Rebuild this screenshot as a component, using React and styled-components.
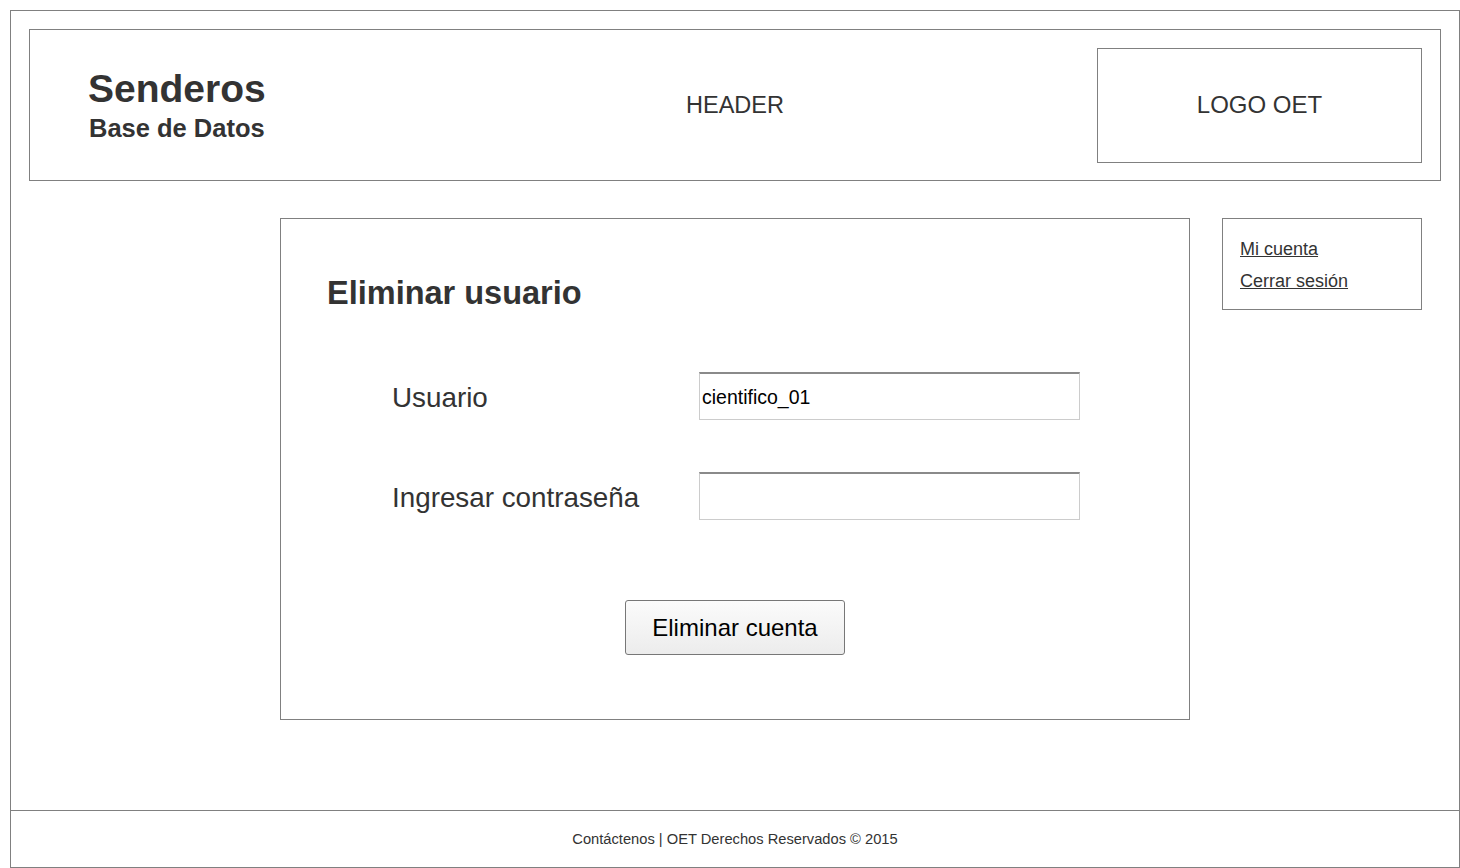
import React from 'react';
import styled, { createGlobalStyle } from 'styled-components';

const GlobalStyle = createGlobalStyle`
  html, body {
    margin: 0;
    padding: 0;
    background: #ffffff;
    font-family: "Liberation Sans", Arial, sans-serif;
    color: #333333;
  }
  #root {
    padding: 10px 0 0 10px;
  }
`;

function App() {
  return (
    <>
      <GlobalStyle />
      <Frame>
        <Header>
          <Brand>
            <BrandTitle>Senderos</BrandTitle>
            <BrandSub>Base de Datos</BrandSub>
          </Brand>
          <HeaderLabel>HEADER</HeaderLabel>
          <LogoBox>LOGO OET</LogoBox>
        </Header>

        <Main>
          <Panel>
            <Title>Eliminar usuario</Title>
            <Form>
              <Row>
                <Label>Usuario</Label>
                <Input type="text" defaultValue="cientifico_01" />
              </Row>
              <Row>
                <Label>Ingresar contraseña</Label>
                <Input type="password" />
              </Row>
            </Form>
            <Actions>
              <Button type="button">Eliminar cuenta</Button>
            </Actions>
          </Panel>
          <SideMenu>
            <MenuLink href="#">Mi cuenta</MenuLink>
            <MenuLink href="#">Cerrar sesión</MenuLink>
          </SideMenu>
        </Main>

        <Footer>Contáctenos | OET Derechos Reservados © 2015</Footer>
      </Frame>
    </>
  );
}

export default App;

const Frame = styled.div`
  width: 1450px;
  height: 858px;
  box-sizing: border-box;
  border: 1px solid #808080;
  display: flex;
  flex-direction: column;
`;

const Header = styled.header`
  margin: 18px 18px 0 18px;
  height: 152px;
  box-sizing: border-box;
  border: 1px solid #808080;
  display: grid;
  grid-template-columns: 1fr auto 1fr;
  align-items: center;
  padding: 0 18px;
`;

const Brand = styled.div`
  justify-self: start;
  margin-left: 40px;
  display: flex;
  flex-direction: column;
  align-items: center;
  gap: 7px;
`;

const BrandTitle = styled.div`
  font-size: 39px;
  font-weight: bold;
  line-height: 39px;
  color: #333333;
`;

const BrandSub = styled.div`
  font-size: 25.5px;
  font-weight: bold;
  line-height: 26px;
  color: #333333;
`;

const HeaderLabel = styled.div`
  font-size: 23.5px;
  color: #333333;
`;

const LogoBox = styled.div`
  justify-self: end;
  width: 325px;
  height: 115px;
  box-sizing: border-box;
  border: 1px solid #808080;
  display: flex;
  align-items: center;
  justify-content: center;
  font-size: 24px;
  color: #333333;
`;

const Main = styled.main`
  flex: 1;
  display: flex;
  align-items: flex-start;
  gap: 32px;
  padding: 37px 0 0 269px;
`;

const Panel = styled.section`
  width: 910px;
  height: 502px;
  box-sizing: border-box;
  border: 1px solid #808080;
  padding: 56px 0 0 46px;
`;

const Title = styled.h1`
  margin: 0;
  font-size: 32.5px;
  font-weight: bold;
  line-height: 36px;
  color: #333333;
`;

const Form = styled.div`
  display: flex;
  flex-direction: column;
  gap: 52px;
  margin: 61px 0 0 65px;
`;

const Row = styled.div`
  display: flex;
  align-items: center;
`;

const Label = styled.label`
  width: 307px;
  padding-top: 4px;
  font-size: 27.8px;
  color: #333333;
`;

const Input = styled.input`
  width: 381px;
  height: 48px;
  box-sizing: border-box;
  border: 1px solid #cccccc;
  border-top: 2px solid #8a8a8a;
  padding: 2px 2px 0 2px;
  font-family: "Liberation Sans", Arial, sans-serif;
  font-size: 19.5px;
  color: #000000;
  background: #ffffff;
  outline: none;
`;

const Actions = styled.div`
  display: flex;
  justify-content: center;
  margin: 80px 0 0 -46px;
`;

const Button = styled.button`
  width: 220px;
  height: 55px;
  box-sizing: border-box;
  border: 1px solid #777777;
  border-radius: 3px;
  background: linear-gradient(#fbfbfb, #ececec);
  font-family: "Liberation Sans", Arial, sans-serif;
  font-size: 24px;
  color: #000000;
  cursor: pointer;
`;

const SideMenu = styled.nav`
  width: 200px;
  height: 92px;
  box-sizing: border-box;
  border: 1px solid #808080;
  display: flex;
  flex-direction: column;
  gap: 11px;
  padding: 20px 0 0 17px;
`;

const MenuLink = styled.a`
  font-size: 18px;
  line-height: 21px;
  color: #333333;
  text-decoration: underline;
  align-self: flex-start;
`;

const Footer = styled.footer`
  height: 57px;
  box-sizing: border-box;
  border-top: 1px solid #808080;
  display: flex;
  align-items: center;
  justify-content: center;
  font-size: 14.7px;
  color: #333333;
`;
